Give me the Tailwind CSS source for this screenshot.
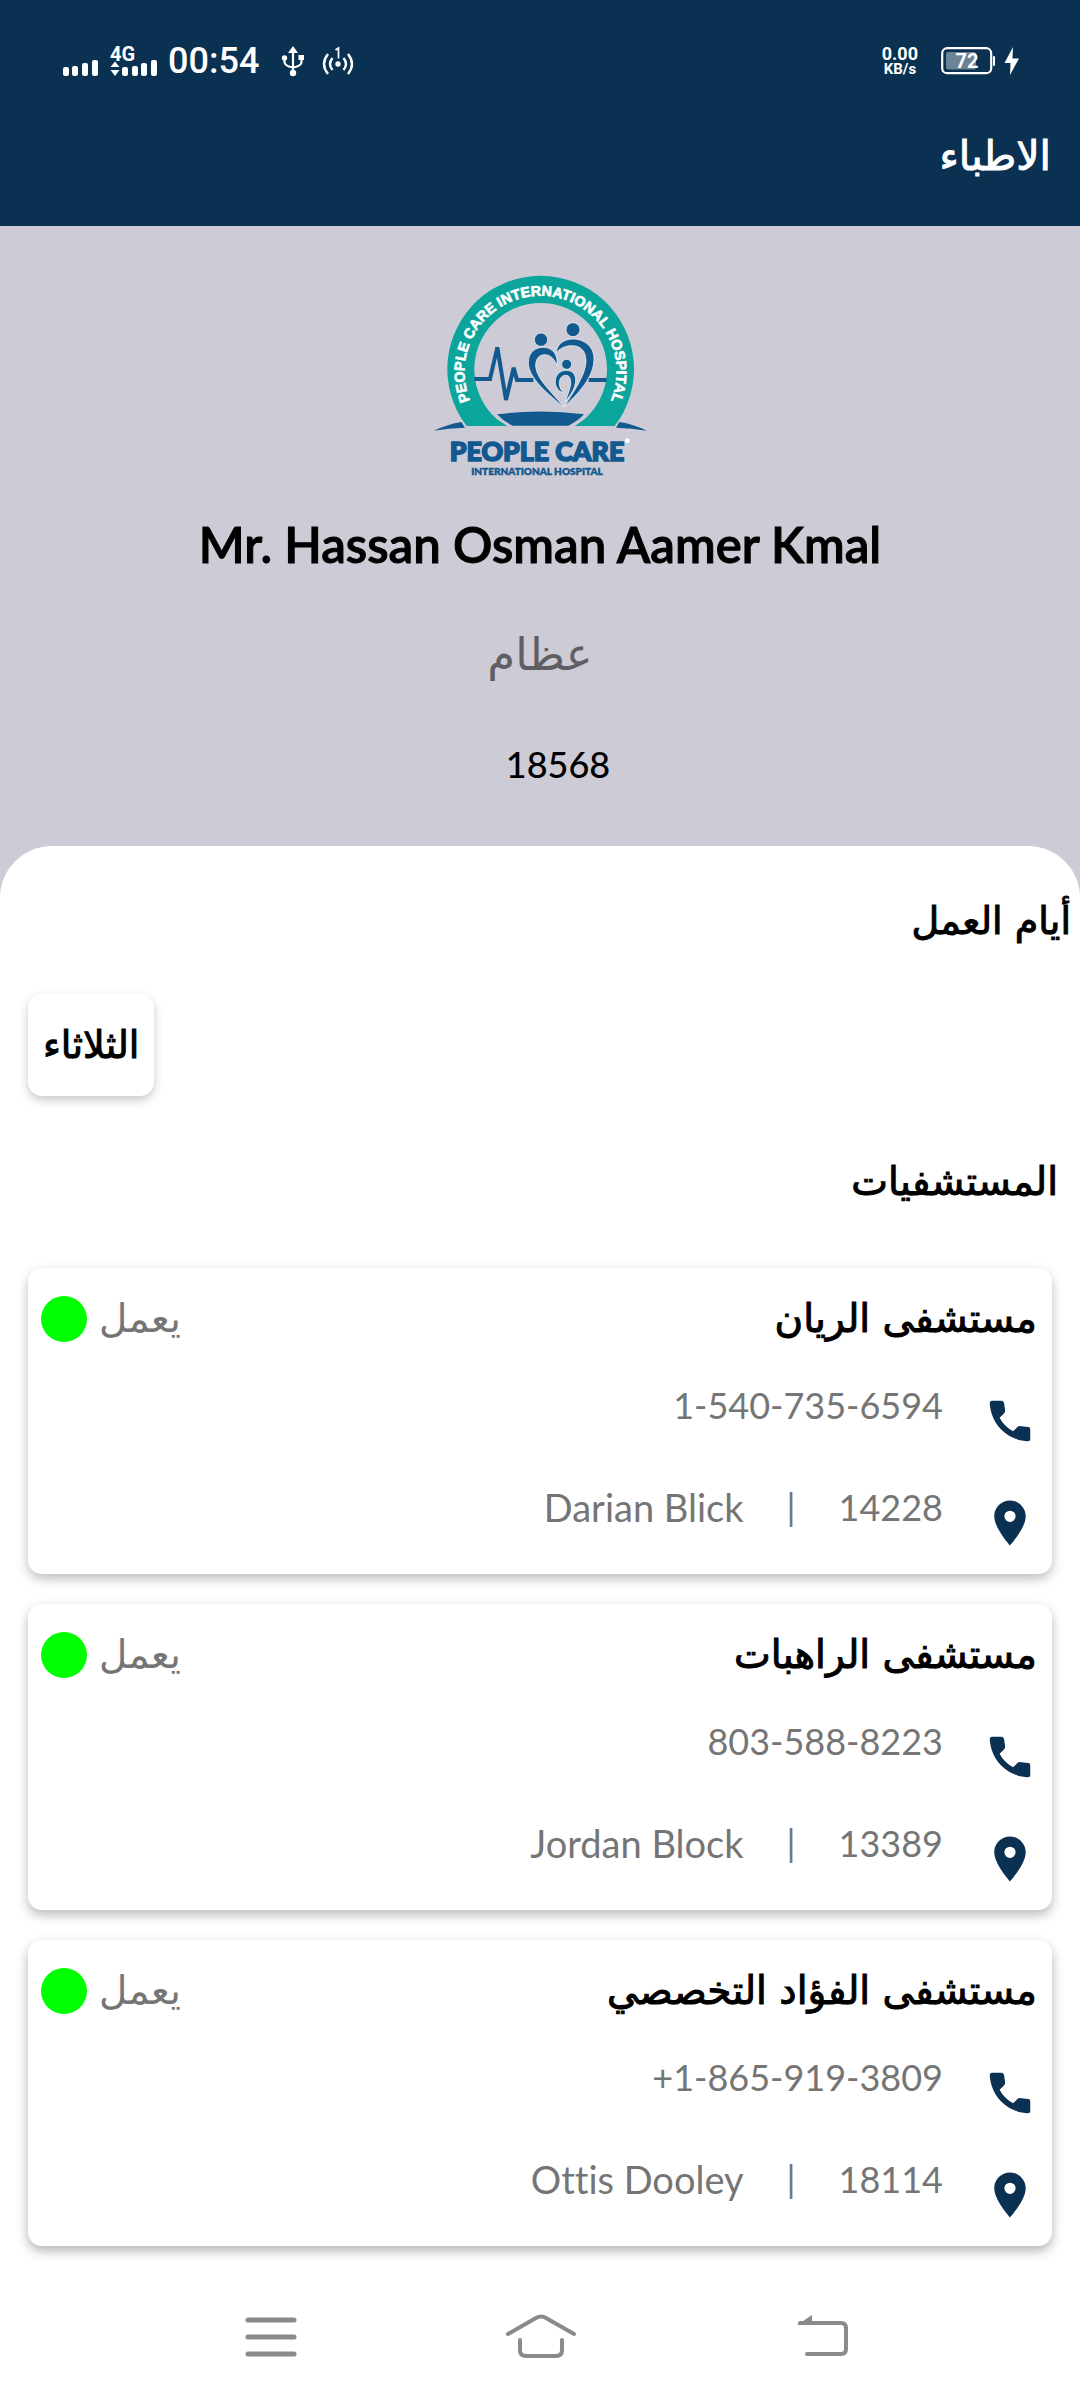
<!DOCTYPE html>
<html lang="ar" dir="rtl">
<head>
<meta charset="utf-8">
<meta name="viewport" content="width=device-width, initial-scale=1">
<title>الاطباء</title>
<script src="https://cdn.jsdelivr.net/npm/@tailwindcss/browser@4"></script>
</head>
<body class="flex min-h-screen flex-col bg-white font-['DejaVu_Sans',sans-serif] text-black">

<svg class="hidden" aria-hidden="true">
  <symbol id="phone" viewBox="0 0 24 24"><path d="M20.200 14.700l-3.300-.4c-.7-.1-1.300.1-1.800.6l-1.700 1.700c-2.500-1.300-4.700-3.400-6-6l1.800-1.800c.5-.5.7-1.100.6-1.700L9.400 4.200C9.300 3.500 8.800 3 8 3H4c-.6 0-1 .5-1 1.100C3.500 13.400 10.800 20.600 20 21c.6 0 1-.4 1-1v-4.300c0-.5-.3-.9-.8-1z"/></symbol>
  <symbol id="pin" viewBox="0 0 24 24"><path d="M12 2C8.13 2 5 5.13 5 9c0 5.25 7 13 7 13s7-7.75 7-13c0-3.87-3.13-7-7-7zm0 9.5a2.5 2.5 0 0 1 0-5 2.5 2.5 0 0 1 0 5z"/></symbol>
</svg>

<header class="bg-[#0a3151] text-white">
  <div dir="ltr" class="flex h-[122px] items-center justify-between pr-[60px] pl-[63px] font-[Roboto,sans-serif]">
    <div class="flex items-center">
      <div class="flex items-end">
        <svg class="h-4 w-[35px]" viewBox="0 0 35 16" fill="currentColor" aria-hidden="true">
          <rect x="0" y="7" width="6" height="9" rx="2"/><rect x="9" y="6" width="6" height="10" rx="2"/><rect x="19" y="3" width="6" height="13" rx="2"/><rect x="29" y="0" width="6" height="16" rx="2"/>
        </svg>
        <div class="ml-3">
          <p class="text-[20px] leading-[16px] font-bold">4G</p>
          <svg class="-mt-0.5 h-4 w-[48px]" viewBox="0 0 48 16" fill="currentColor" aria-hidden="true">
            <path d="M.5 7L5 1.500L9.500 7zM.5 10h9L5 16z"/>
            <rect x="12" y="7" width="6" height="9" rx="2"/><rect x="22" y="6" width="6" height="10" rx="2"/><rect x="31" y="3" width="6" height="13" rx="2"/><rect x="41" y="0" width="6" height="16" rx="2"/>
          </svg>
        </div>
      </div>
      <time class="ml-2.5 text-[36px] leading-[40px] font-medium">00:54</time>
      <svg class="ml-[22px] h-[32px] w-[24px]" viewBox="0 0 24 32" fill="none" stroke="currentColor" stroke-width="2.200" aria-label="USB">
        <path d="M12 5v23M3.500 14v3q0 4 8.500 5.500M20.500 12v5q0 4-8.500 5.500"/>
        <path d="M12 1l5 7H7z" fill="currentColor" stroke="none"/><circle cx="3.500" cy="13" r="2.700" fill="currentColor" stroke="none"/><path d="M17.500 10h5.500v5h-5.500z" fill="currentColor" stroke="none"/><circle cx="12" cy="28" r="3.200" fill="currentColor" stroke="none"/>
      </svg>
      <svg class="ml-[17px] h-[30px] w-[32px]" viewBox="0 0 32 30" fill="none" stroke="currentColor" stroke-width="2.400" aria-label="hotspot">
        <path d="M6 8Q-2 18 6 28M26 8Q34 18 26 28M10.500 12Q5.500 18 10.500 24M21.500 12Q26.500 18 21.500 24"/>
        <circle cx="16" cy="18" r="2.700" fill="currentColor" stroke="none"/><path d="M13.500 4L16.500 2v10.500" stroke-width="1.700"/>
      </svg>
    </div>
    <div class="flex items-center">
      <div class="text-center font-bold"><p class="text-[18px] leading-[17px]">0.00</p><p class="text-[15px] leading-[15px]">KB/s</p></div>
      <svg class="ml-[23px] h-[28px] w-[79px]" viewBox="0 0 79 28" fill="currentColor" aria-label="72%">
        <rect x="1.200" y="1.200" width="49" height="25" rx="5" fill="none" stroke="currentColor" stroke-width="2.200"/>
        <rect x="5" y="5" width="30" height="17.500" rx="2" opacity=".4"/>
        <text x="26" y="21" text-anchor="middle" font-size="20" font-weight="700">72</text>
        <rect x="52" y="9" width="2" height="10" rx="1"/>
        <path d="M72 0L63.500 16H69.500L69 28L78 11.500H71.500z"/>
      </svg>
    </div>
  </div>
  <h1 class="px-[29px] pt-2.5 pb-[46px] text-[41px] leading-[48px] font-normal [-webkit-text-stroke:1px_white]">الاطباء</h1>
</header>

<main class="overflow-hidden bg-[#cdcbd5]">
  <section class="flex flex-col items-center pt-[34px] pb-[58px] font-[Lato,'DejaVu_Sans',sans-serif]">
    <svg dir="ltr" class="h-[230px] w-[240px]" viewBox="0 0 720 690" role="img" aria-label="People Care International Hospital">
      <path d="M140 498A280 280 0 1 1 584 498H465L494 477A199 199 0 1 0 230 477L262 498z" fill="#0ba59c"/>
      <path id="arc" d="M187 482A228 228 0 1 1 536 482" fill="none"/>
      <text fill="#fff" stroke="#fff" stroke-width="2" font-family="Liberation Sans" font-weight="700" font-size="43" text-anchor="middle"><textPath href="#arc" startOffset="50%">PEOPLE CARE INTERNATIONAL HOSPITAL</textPath></text>
      <g fill="none" stroke="#125990" stroke-width="12">
        <path d="M163 357H210L232 262L258 420L281 323L291 360H340M506 360H560"/>
      </g>
      <g fill="#125990" stroke="#fff" stroke-width="2">
        <circle cx="363" cy="239" r="20"/><circle cx="459" cy="209" r="21"/><circle cx="440" cy="313" r="15"/>
        <path d="M431 440C380 400 325 352 325 308C325 275 348 262 370 262C398 262 415 285 411 316C403 296 390 284 375 284C355 284 347 298 347 318C350 360 400 400 431 440z"/>
        <path d="M433 440C475 400 522 352 522 296C522 258 492 237 459 237C430 237 411 254 408 278C423 262 440 257 455 257C485 257 498 275 498 306C495 350 460 395 433 440z"/>
        <path d="M431 399C410 392 405 375 406 362C408 342 422 331 439 331C458 331 468 345 467 362C466 385 450 408 436 424C446 396 454 378 452 362C450 350 444 345 436 346C424 347 417 358 418 372C419 384 424 392 431 399z"/>
      </g>
      <path d="M231 463Q361 446 492 463Q475 483 445 497H278Q250 484 231 463zM42 512Q85 492 124 486L135 503Q85 504 42 512zM680 512Q640 492 598 486L588 503Q635 504 680 512z" fill="#125990"/>
      <circle cx="622" cy="542" r="7" fill="#fff"/>
      <text x="351" y="602" text-anchor="middle" fill="#125990" stroke="#125990" stroke-width="5" font-family="Lato" font-weight="900" font-size="80">PEOPLE CARE</text>
      <text x="351" y="645" text-anchor="middle" fill="#125990" stroke="#125990" stroke-width="1" font-family="Lato" font-weight="800" font-size="30">INTERNATIONAL HOSPITAL</text>
    </svg>
    <h2 dir="ltr" class="mt-6 text-[49px] leading-[60px] font-semibold [-webkit-text-stroke:1px_black]">Mr. Hassan Osman Aamer Kmal</h2>
    <p class="mt-[51px] font-['DejaVu_Sans',sans-serif] text-[45px] leading-[60px] text-[#5f5e63]">عظام</p>
    <p class="mt-[55px] ml-9 text-[36px] leading-[48px] font-medium">18568</p>
  </section>

  <section class="rounded-t-[52px] bg-white px-7 pt-[51px] pb-[15px]">
    <h2 class="-mr-[19px] text-[38px] leading-[48px] font-normal [-webkit-text-stroke:1px_black]">أيام العمل</h2>
    <ul class="mt-[49px] flex justify-end">
      <li class="flex h-[102px] items-center justify-center rounded-[14px] bg-white px-[15px] text-[38px] leading-[48px] shadow-[0_4px_10px_rgba(0,0,0,0.22)] [-webkit-text-stroke:1px_black]">الثلاثاء</li>
    </ul>
    <h2 class="-mr-1.5 mt-[62px] text-[39px] leading-[48px] font-normal [-webkit-text-stroke:1px_black]">المستشفيات</h2>

    <div class="mt-[62px] flex flex-col gap-[30px]">
      <article class="rounded-[14px] bg-white px-[15px] pt-[27px] pb-6 shadow-[0_5px_12px_rgba(0,0,0,0.26)]">
        <div class="flex items-center justify-between">
          <h3 class="text-[39px] leading-[48px] font-normal [-webkit-text-stroke:1px_black]">مستشفى الريان</h3>
          <p class="-ml-0.5 flex items-center gap-3 text-[39px] leading-[48px] text-[#757575]">يعمل<span class="size-[46px] rounded-full bg-[#00ff00]"></span></p>
        </div>
        <div class="mt-[38px] flex items-start gap-10">
          <svg class="mt-[13px] size-[54px] fill-[#0a3151]"><use href="#phone"/></svg>
          <a href="tel:1-540-735-6594" dir="ltr" class="font-[Lato,sans-serif] text-[36px] leading-[48px] text-[#757575]">1-540-735-6594</a>
        </div>
        <div class="mt-[35px] flex items-start gap-10">
          <svg class="mt-[13px] size-[54px] fill-[#0a3151]"><use href="#pin"/></svg>
          <p class="flex gap-[43px] font-[Lato,sans-serif] text-[36px] leading-[48px] text-[#757575]"><span>14228</span><span>|</span><span class="text-[38px]">Darian Blick</span></p>
        </div>
      </article>

      <article class="rounded-[14px] bg-white px-[15px] pt-[27px] pb-6 shadow-[0_5px_12px_rgba(0,0,0,0.28)]">
        <div class="flex items-center justify-between">
          <h3 class="text-[39px] leading-[48px] font-normal [-webkit-text-stroke:1px_black]">مستشفى الراهبات</h3>
          <p class="-ml-0.5 flex items-center gap-3 text-[39px] leading-[48px] text-[#757575]">يعمل<span class="size-[46px] rounded-full bg-[#00ff00]"></span></p>
        </div>
        <div class="mt-[38px] flex items-start gap-10">
          <svg class="mt-[13px] size-[54px] fill-[#0a3151]"><use href="#phone"/></svg>
          <a href="tel:803-588-8223" dir="ltr" class="font-[Lato,sans-serif] text-[36px] leading-[48px] text-[#757575]">803-588-8223</a>
        </div>
        <div class="mt-[35px] flex items-start gap-10">
          <svg class="mt-[13px] size-[54px] fill-[#0a3151]"><use href="#pin"/></svg>
          <p class="flex gap-[43px] font-[Lato,sans-serif] text-[36px] leading-[48px] text-[#757575]"><span>13389</span><span>|</span><span class="text-[38px]">Jordan Block</span></p>
        </div>
      </article>

      <article class="rounded-[14px] bg-white px-[15px] pt-[27px] pb-6 shadow-[0_5px_12px_rgba(0,0,0,0.3)]">
        <div class="flex items-center justify-between">
          <h3 class="text-[39px] leading-[48px] font-normal [-webkit-text-stroke:1px_black]">مستشفى الفؤاد التخصصي</h3>
          <p class="-ml-0.5 flex items-center gap-3 text-[39px] leading-[48px] text-[#757575]">يعمل<span class="size-[46px] rounded-full bg-[#00ff00]"></span></p>
        </div>
        <div class="mt-[38px] flex items-start gap-10">
          <svg class="mt-[13px] size-[54px] fill-[#0a3151]"><use href="#phone"/></svg>
          <a href="tel:+1-865-919-3809" dir="ltr" class="font-[Lato,sans-serif] text-[36px] leading-[48px] text-[#757575]">+1-865-919-3809</a>
        </div>
        <div class="mt-[35px] flex items-start gap-10">
          <svg class="mt-[13px] size-[54px] fill-[#0a3151]"><use href="#pin"/></svg>
          <p class="flex gap-[43px] font-[Lato,sans-serif] text-[36px] leading-[48px] text-[#757575]"><span>18114</span><span>|</span><span class="text-[38px] [font-variant-ligatures:none]">Ottis Dooley</span></p>
        </div>
      </article>
    </div>
  </section>
</main>

<nav dir="ltr" class="flex flex-1 items-start justify-center gap-[180px] pt-[46px] pb-10">
  <button type="button" aria-label="القائمة"><svg class="h-[52px] w-[90px]" viewBox="0 0 90 52" fill="none" stroke="#8a8a8a" stroke-width="5" stroke-linecap="round"><path d="M23 13H69M23 30H69M23 47H69"/></svg></button>
  <button type="button" aria-label="الرئيسية"><svg class="h-[52px] w-[90px]" viewBox="0 0 90 52" fill="none" stroke="#8a8a8a" stroke-width="4" stroke-linecap="round"><path d="M13 27L41 11Q46 8 51 11L79 27M25 33V43Q25 49 31 49H61Q67 49 67 43V33"/></svg></button>
  <button type="button" aria-label="رجوع"><svg class="h-[52px] w-[90px]" viewBox="0 0 90 52" fill="none" stroke="#8a8a8a" stroke-width="4" stroke-linecap="round"><path d="M35 16H76Q81 16 81 21V42Q81 47 76 47H42"/><path d="M47 8L32 18H47z" fill="#8a8a8a" stroke="none"/></svg></button>
</nav>
</body>
</html>
